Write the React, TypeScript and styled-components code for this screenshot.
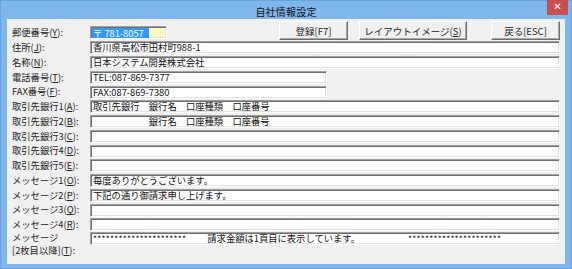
import React from 'react';
import styled, {createGlobalStyle} from 'styled-components';

const GlobalStyle = createGlobalStyle`
  html, body {
    margin: 0;
    padding: 0;
    background: #ffffff;
  }

  body {
    font-family: "Noto Sans CJK JP", "Noto Sans", sans-serif;
    font-size: 9.3px;
    color: #1a1a1a;
  }
`;

const Window = styled.div`
  width: 572px;
  height: 269px;
  display: flex;
  flex-direction: column;
  background: #7fb7ec;
  box-sizing: border-box;
  border: 1px solid #6aa3db;
`;

const TitleBar = styled.div`
  position: relative;
  height: 18px;
  display: flex;
  align-items: center;
  justify-content: center;
  flex-shrink: 0;

  & h1 {
    margin: 2px 0 0;
    font-size: 10px;
    font-weight: 400;
    color: #111;
    letter-spacing: 0.2px;
  }
`;

const CloseButton = styled.div`
  position: absolute;
  top: -1px;
  right: 3px;
  width: 21px;
  height: 15px;
  background: #c7504f;
  color: #fff;
  font-size: 10px;
  line-height: 14px;
  text-align: center;
  font-family: "DejaVu Sans", sans-serif;
`;

const Client = styled.div`
  flex: 1;
  margin: 0 6px 4px 6px;
  background: #f0f0f0;
  padding: 6.6px 5px 0 5px;
  display: flex;
  flex-direction: column;
`;

const Row = styled.div<{$tall?: boolean}>`
  display: flex;
  align-items: ${p => (p.$tall ? 'flex-start' : 'center')};
  height: ${p => (p.$tall ? '28px' : '14.77px')};
  margin-top: ${p => (p.$tall ? '-0.6px' : '0')};
`;

const Label = styled.div`
  width: 78px;
  flex-shrink: 0;
  white-space: nowrap;
  line-height: 11.5px;
  color: #222;

  & u {
    text-underline-offset: 1px;
  }
`;

const Field = styled.div<{$width?: number; $yellow?: boolean}>`
  box-sizing: border-box;
  height: 13px;
  width: ${p => (p.$width ? `${p.$width}px` : 'auto')};
  flex: ${p => (p.$width ? '0 0 auto' : '1')};
  background: ${p => (p.$yellow ? '#fffcc0' : '#ffffff')};
  border: 1px solid;
  border-color: #a0a0a0 #ffffff #ffffff #a0a0a0;
  box-shadow: inset 1px 1px 0 #6f6f6f, inset -1px -1px 0 #e3e3e3;
  padding: 0 2px 0 2px;
  display: flex;
  align-items: center;
  white-space: pre;
  overflow: hidden;
  line-height: 11px;
  color: #111;
`;

const Selected = styled.span`
  background: #3399ff;
  color: #ffffff;
  margin-left: -1px;
  padding: 0 5px 0 1px;
  line-height: 10px;
`;

const Toolbar = styled.div`
  margin-left: auto;
  align-self: flex-start;
  margin-top: -4.6px;
  display: flex;
  align-items: flex-start;
`;

const Button = styled.div<{$width: number; $gap?: number}>`
  box-sizing: border-box;
  width: ${p => p.$width}px;
  height: 19px;
  margin-left: ${p => p.$gap ?? 0}px;
  background: #f0f0f0;
  border: 1px solid;
  border-color: #ffffff #6d6d6d #6d6d6d #ffffff;
  box-shadow: inset -1px -1px 0 #a8a8a8;
  display: flex;
  align-items: center;
  justify-content: center;
  color: #222;
  font-size: 9.5px;

  & u {
    text-underline-offset: 1px;
  }
`;

const Stars = styled.span<{$offset?: number}>`
  font-size: 8.5px;
  letter-spacing: 0.27px;
  color: #222;
  margin-left: ${p => p.$offset ?? 0}px;
`;

const Note = styled.span<{$offset: number}>`
  margin-left: ${p => p.$offset}px;
`;

const TallLabel = styled(Label)`
  line-height: 13px;
  margin-top: -0.5px;

  & span {
    display: block;
    height: 13px;
  }
`;

type Line = {
  label: string;
  key: string;
  value?: string;
  width?: number;
};

const lines: Line[] = [
  {label: '住所', key: 'J', value: '香川県高松市田村町988-1'},
  {label: '名称', key: 'N', value: '日本システム開発株式会社'},
  {label: '電話番号', key: 'T', value: 'TEL:087-869-7377', width: 237},
  {label: 'FAX番号', key: 'F', value: 'FAX:087-869-7380', width: 237},
  {label: '取引先銀行1', key: 'A', value: '取引先銀行　銀行名　口座種類　口座番号'},
  {label: '取引先銀行2', key: 'B', value: '　　　　　　銀行名　口座種類　口座番号'},
  {label: '取引先銀行3', key: 'C'},
  {label: '取引先銀行4', key: 'D'},
  {label: '取引先銀行5', key: 'E'},
  {label: 'メッセージ1', key: 'O', value: '毎度ありがとうございます。'},
  {label: 'メッセージ2', key: 'P', value: '下記の通り御請求申し上げます。'},
  {label: 'メッセージ3', key: 'Q'},
  {label: 'メッセージ4', key: 'R'},
];

const KeyLabel: React.FC<{text: string; hotkey: string}> = ({text, hotkey}) => (
  <>
    {text}(<u>{hotkey}</u>):
  </>
);

const App: React.FC = () => {
  const stars = '*'.repeat(22);

  return (
    <>
      <GlobalStyle/>
      <Window>
        <TitleBar>
          <h1>自社情報設定</h1>
          <CloseButton>✕</CloseButton>
        </TitleBar>
        <Client>
          <Row>
            <Label><KeyLabel text={'郵便番号'} hotkey={'Y'}/></Label>
            <Field $width={77} $yellow>
              <Selected>〒 781-8057</Selected>
            </Field>
            <Toolbar>
              <Button $width={69}>登録[F7]</Button>
              <Button $width={108} $gap={11}>レイアウトイメージ(<u>S</u>)</Button>
              <Button $width={69} $gap={24}>戻る[ESC]</Button>
            </Toolbar>
          </Row>
          {lines.map(line => (
            <Row key={line.key}>
              <Label><KeyLabel text={line.label} hotkey={line.key}/></Label>
              <Field $width={line.width}>{line.value}</Field>
            </Row>
          ))}
          <Row $tall>
            <TallLabel>
              <span>メッセージ</span>
              <span>[2枚目以降](<u>T</u>):</span>
            </TallLabel>
            <Field>
              <Stars>{stars}</Stars>
              <Note $offset={21}>請求金額は1頁目に表示しています。</Note>
              <Stars $offset={48}>{stars}</Stars>
            </Field>
          </Row>
        </Client>
      </Window>
    </>
  );
};

export default App;
